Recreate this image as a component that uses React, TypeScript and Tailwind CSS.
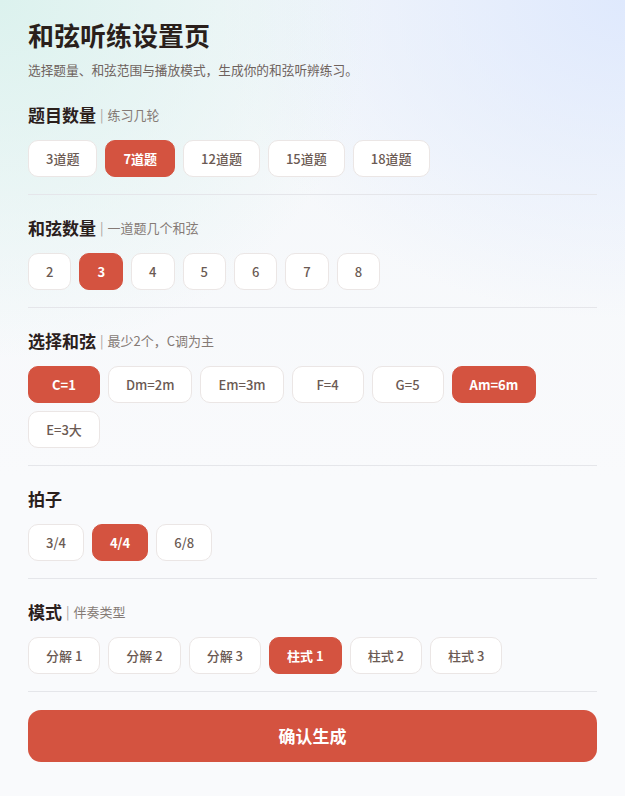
import { useState } from "react";

const QUESTION_COUNTS = [3, 7, 12, 15, 18];
const CHORD_COUNTS = [2, 3, 4, 5, 6, 7, 8];
const CHORDS = ["C=1", "Dm=2m", "Em=3m", "F=4", "G=5", "Am=6m", "E=3大"];
const METERS = ["3/4", "4/4", "6/8"];
const MODES = ["分解 1", "分解 2", "分解 3", "柱式 1", "柱式 2", "柱式 3"];

function Chip({
    label,
    active,
    wide,
    onClick,
}: {
    label: string;
    active: boolean;
    wide?: boolean;
    onClick: () => void;
}) {
    return (
        <button
            onClick={onClick}
            className={`h-[37px] rounded-[10px] border px-[17px] text-[13px] font-medium leading-none ${
                wide ? "min-w-[72px]" : ""
            } ${
                active
                    ? "border-[#d45340] bg-[#d45340] font-semibold text-white"
                    : "border-[#ebe6e5] bg-white text-[#6b5a53]"
            }`}
        >
            {label}
        </button>
    );
}

function Section({
    title,
    hint,
    children,
}: {
    title: string;
    hint?: string;
    children: React.ReactNode;
}) {
    return (
        <section className="border-b border-[#e5e6ea] pb-[17px] pt-[21px]">
            <h2 className="mb-[13px] flex items-center text-[17px] font-bold leading-[24px] text-[#2b201c]">
                {title}
                {hint && (
                    <span className="ml-1 text-[13px] font-normal text-[#857a75]">
                        <span className="mr-1 text-[#a8a09c]">|</span>
                        {hint}
                    </span>
                )}
            </h2>
            <div className="flex flex-wrap gap-2">{children}</div>
        </section>
    );
}

export default function App() {
    const [questions, setQuestions] = useState(7);
    const [chordCount, setChordCount] = useState(3);
    const [chords, setChords] = useState<string[]>(["C=1", "Am=6m"]);
    const [meter, setMeter] = useState("4/4");
    const [mode, setMode] = useState("柱式 1");

    const toggleChord = (c: string) => {
        setChords((prev) =>
            prev.includes(c) ? (prev.length > 2 ? prev.filter((x) => x !== c) : prev) : [...prev, c]
        );
    };

    return (
        <div
            className="min-h-[796px] bg-[radial-gradient(ellipse_60%_45%_at_0%_0%,#dcf2ee_0%,rgba(220,242,238,0)_100%),radial-gradient(ellipse_65%_40%_at_100%_0%,#dfe9fd_0%,rgba(223,233,253,0)_100%),linear-gradient(#f4f7fa,#f9fafc_60%)] px-7 pt-[19px] pb-9"
            style={{ fontFamily: '"Noto Sans CJK SC", "Noto Sans", sans-serif' }}
        >
            <header className="mb-[2px]">
                <h1 className="text-[26px] font-bold leading-[32px] text-[#2a1f1b]">和弦听练设置页</h1>
                <p className="mt-[9px] text-[12.7px] leading-[20px] text-[#6e625d]">
                    选择题量、和弦范围与播放模式，生成你的和弦听辨练习。
                </p>
            </header>

            <Section title="题目数量" hint="练习几轮">
                {QUESTION_COUNTS.map((n) => (
                    <Chip
                        key={n}
                        label={`${n}道题`}
                        active={questions === n}
                        onClick={() => setQuestions(n)}
                    />
                ))}
            </Section>

            <Section title="和弦数量" hint="一道题几个和弦">
                {CHORD_COUNTS.map((n) => (
                    <Chip
                        key={n}
                        label={String(n)}
                        active={chordCount === n}
                        onClick={() => setChordCount(n)}
                    />
                ))}
            </Section>

            <Section title="选择和弦" hint="最少2个，C调为主">
                {CHORDS.map((c) => (
                    <Chip
                        key={c}
                        label={c}
                        wide
                        active={chords.includes(c)}
                        onClick={() => toggleChord(c)}
                    />
                ))}
            </Section>

            <Section title="拍子">
                {METERS.map((m) => (
                    <Chip key={m} label={m} active={meter === m} onClick={() => setMeter(m)} />
                ))}
            </Section>

            <Section title="模式" hint="伴奏类型">
                {MODES.map((m) => (
                    <Chip key={m} label={m} active={mode === m} onClick={() => setMode(m)} />
                ))}
            </Section>

            <button className="mt-[18px] h-[52px] w-full rounded-[13px] bg-[#d45340] text-[17px] font-bold text-white">
                确认生成
            </button>
        </div>
    );
}
